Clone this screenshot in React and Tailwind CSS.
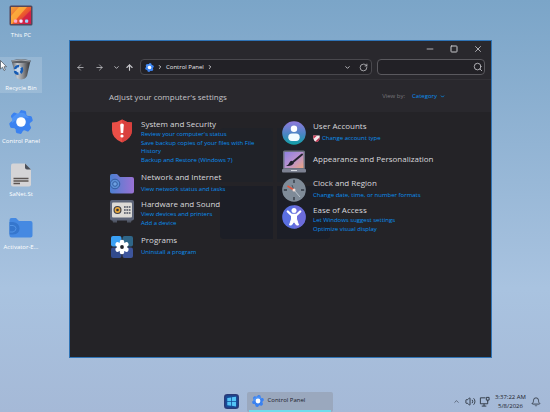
import {
  ArrowLeft,
  ArrowRight,
  ArrowUp,
  Bell,
  ChevronDown,
  ChevronRight,
  ChevronUp,
  Minus,
  RotateCw,
  Search,
  Square,
  Volume2,
  X,
} from 'lucide-react'

function GearIcon({ className }) {
  return (
    <svg viewBox="0 0 24 24" className={className} aria-hidden="true">
      <g fill="#3b82f0">
        <circle cx="12" cy="12" r="9" />
        {[0, 60, 120, 180, 240, 300].map((a) => (
          <path key={a} d="M7.500 6 9 1.500Q9.400 .2 10.600 .2H13.400Q14.600 .2 15 1.500L16.500 6Z" transform={`rotate(${a + 12} 12 12)`} />
        ))}
      </g>
      <path d="M3 8Q8 2 15 3L20 8Q12 6 3 13Z" fill="#5ba0fa" opacity=".6" />
      <circle cx="12" cy="12" r="4.800" fill="#fff" />
    </svg>
  )
}

function PcIcon({ className }) {
  return (
    <svg viewBox="0 0 24 24" className={className} aria-hidden="true">
      <defs>
        <linearGradient id="pc" x1="0" y1="0" x2="1" y2="1">
          <stop offset="0" stopColor="#f2a33c" />
          <stop offset=".5" stopColor="#ee5b2c" />
          <stop offset="1" stopColor="#b81f5c" />
        </linearGradient>
      </defs>
      <rect x=".5" y="1.500" width="23" height="20" rx="1.500" fill="#54475a" />
      <rect x="2" y="3" width="20" height="17" fill="url(#pc)" />
      <path d="M2 12 10 3H18L3 20H2Z" fill="#ffb93f" opacity=".75" />
      <path d="M22 6 10 18V20H22Z" fill="#d31b45" opacity=".75" />
      <rect x="5" y="15.500" width="3.200" height="3.200" rx="1" fill="#ffa8cf" />
      <rect x="10.400" y="15.500" width="3.200" height="3.200" rx="1" fill="#f4e6ff" />
      <rect x="16" y="15.500" width="3.200" height="3.200" rx="1" fill="#9ed4ff" />
    </svg>
  )
}

function BinIcon({ className }) {
  return (
    <svg viewBox="0 0 24 24" className={className} aria-hidden="true">
      <defs>
        <linearGradient id="bin" x1="0" x2="1">
          <stop offset="0" stopColor="#55595f" />
          <stop offset=".3" stopColor="#c3c8ce" />
          <stop offset=".6" stopColor="#8b8d91" />
          <stop offset="1" stopColor="#2c2d30" />
        </linearGradient>
      </defs>
      <path d="M2.500 3.500 6.500 19Q8 22.500 12.500 22.500Q16.500 22 18 19L21.500 3.500Z" fill="url(#bin)" />
      <path d="M2.500 3.500Q12 1 21.500 3.500L21 5.500Q12 6.500 3.200 5.500Z" fill="#5b5e63" />
      <path d="M3 4Q12 2 21 4" fill="none" stroke="#c9cdd2" strokeWidth=".7" />
      <circle cx="9.500" cy="13" r="3.800" fill="#c9d8ea" />
      <g fill="none" stroke="#155bb4" strokeWidth="2.400">
        <path d="M6 12Q7 8.800 10 9.200" />
        <path d="M12.500 10.500Q14 14 11.500 16" />
        <path d="M9.500 16.800Q6.500 16.800 6 14" />
      </g>
    </svg>
  )
}

function FileIcon({ className }) {
  return (
    <svg viewBox="0 0 24 24" className={className} aria-hidden="true">
      <path d="M4 .5H16L22 6.500V21.500Q22 23.500 20 23.500H4Q2 23.500 2 21.500V2.500Q2 .5 4 .5Z" fill="#d5d4d6" />
      <path d="M16 .5 22 6.500H18Q16 6.500 16 4.500Z" fill="#4b505a" />
      <path d="M4.500 15.500H19.500M4.500 18H19.500M4.500 20.500H11" stroke="#5c5553" strokeWidth="1.500" />
    </svg>
  )
}

function FolderIcon({ className }) {
  return (
    <svg viewBox="0 0 24 24" className={className} aria-hidden="true">
      <path d="M.5 4Q.5 2 2.500 2H7L10 5H21.500Q23.500 5 23.500 7V19.500Q23.500 21.500 21.500 21.500H2.500Q.5 21.500 .5 19.500Z" fill="#4589e2" />
      <path d="M.5 6H4Q10.500 7 10.500 12.500T4 18.500H.5Z" fill="#3576cd" />
      <path d="M1 9.500H4Q7 10 7 12.500T4 16H1" fill="none" stroke="#5294e6" />
    </svg>
  )
}

function ShieldIcon({ className }) {
  return (
    <svg viewBox="0 0 24 24" className={className} aria-hidden="true">
      <path d="M12 .5Q16.500 3.600 22 3.500V11Q22 19.500 12 23.500Q2 19.500 2 11V3.500Q7.500 3.600 12 .5Z" fill="#ea4f47" />
      <path d="M12 .5Q16.500 3.600 22 3.500V11Q22 19.500 12 23.500Z" fill="#d9403d" />
      <path d="M10.200 6Q10.200 4.500 12 4.500T13.800 6L13.200 14H10.800Z" fill="#fff" />
      <circle cx="12" cy="17" r="1.600" fill="#fff" />
    </svg>
  )
}

function NetworkIcon({ className }) {
  return (
    <svg viewBox="0 0 24 24" className={className} aria-hidden="true">
      <defs>
        <linearGradient id="net" x1="0" x2="1">
          <stop offset="0" stopColor="#4c7fd0" />
          <stop offset="1" stopColor="#9a72d4" />
        </linearGradient>
      </defs>
      <path d="M0 4Q0 2 2 2H7L10 5H22Q24 5 24 7V19.500Q24 21.500 22 21.500H2Q0 21.500 0 19.500Z" fill="url(#net)" />
      <circle cx="5" cy="12" r="4.800" fill="#5b8ed6" stroke="#335c9f" />
      <circle cx="5" cy="12" r="2.300" fill="#6ea1e2" stroke="#335c9f" />
    </svg>
  )
}

function SafeIcon({ className }) {
  return (
    <svg viewBox="0 0 24 24" className={className} aria-hidden="true">
      <path d="M2 20H7V23.500H3ZM17 20H22L21 23.500H17Z" fill="#4f5563" />
      <rect y="1" width="24" height="20.500" rx="2" fill="#5c6478" />
      <rect x="2" y="3.500" width="20" height="15" rx="1" fill="#dcdad6" />
      <circle cx="7.500" cy="11" r="4" fill="#3c3d46" />
      <circle cx="7.500" cy="11" r="2.900" fill="#e6a83c" />
      <circle cx="7.500" cy="11" r="1.300" fill="#2f2f38" />
      <path d="M14 8H20.500M14 11H20.500M14 14H20.500" stroke="#4a5060" strokeWidth="1.700" strokeDasharray="1.700 .7" />
    </svg>
  )
}

function ProgramsIcon({ className }) {
  return (
    <svg viewBox="0 0 24 24" className={className} aria-hidden="true">
      <rect x="1" y="1" width="10.500" height="10.500" rx="2" fill="#3aa0f4" />
      <rect x="12.500" y="1" width="10.500" height="10.500" rx="2" fill="#2f6688" />
      <rect x="1" y="12.500" width="10.500" height="10.500" rx="2" fill="#314a8c" />
      <rect x="12.500" y="12.500" width="10.500" height="10.500" rx="2" fill="#3d559c" />
      <g fill="#fff">
        {[0, 60, 120, 180, 240, 300].map((a) => (
          <circle key={a} cx="12" cy="7" r="2.300" transform={`rotate(${a} 12 12)`} />
        ))}
        <circle cx="12" cy="12" r="5" />
      </g>
      <circle cx="12" cy="12" r="1.900" fill="#23242a" />
    </svg>
  )
}

function UserIcon({ className }) {
  return (
    <svg viewBox="0 0 24 24" className={className} aria-hidden="true">
      <defs>
        <linearGradient id="user" x1="0" y1="0" x2="0" y2="1">
          <stop offset="0" stopColor="#9179dc" />
          <stop offset=".55" stopColor="#4a86c4" />
          <stop offset="1" stopColor="#0fa0a4" />
        </linearGradient>
      </defs>
      <circle cx="12" cy="12" r="11.800" fill="url(#user)" />
      <circle cx="12" cy="7.800" r="3.200" fill="#fff" />
      <rect x="6.300" y="12.500" width="11.400" height="7.500" rx="3.700" fill="#f2fbff" />
    </svg>
  )
}

function AppearanceIcon({ className }) {
  return (
    <svg viewBox="0 0 24 24" className={className} aria-hidden="true">
      <defs>
        <linearGradient id="look" x1="0" y1="0" x2="1" y2="1">
          <stop offset="0" stopColor="#8f80e0" />
          <stop offset=".5" stopColor="#b892d0" />
          <stop offset="1" stopColor="#eba481" />
        </linearGradient>
      </defs>
      <rect x="1" y=".5" width="22" height="19" rx="1.500" fill="#6c7180" />
      <rect x="2.500" y="2" width="19" height="16" fill="url(#look)" />
      <path d="M20 4.500 11 12" stroke="#252530" strokeWidth="2" strokeLinecap="round" />
      <path d="M10 10.800 12 13Q10 16.500 4 15.800Q6.500 15 7.200 13Q8 10.800 10 10.800Z" fill="#1f202c" />
      <rect y="19" width="24" height="3.500" rx="1" fill="#7c8192" />
      <path d="M9 20.500H15" stroke="#d5d8e0" />
    </svg>
  )
}

function ClockIcon({ className }) {
  return (
    <svg viewBox="0 0 24 24" className={className} aria-hidden="true">
      <circle cx="12" cy="12" r="11.800" fill="#7f8b98" />
      <path d="M12 1.800V5M12 19V22.200M1.800 12H5M19 12H22.200" stroke="#343b45" strokeWidth="1.400" />
      <path d="M12 12 10 7" stroke="#4b5561" strokeWidth="1" />
      <path d="M12 12 5.500 8" stroke="#e2553c" strokeWidth="1.600" />
      <path d="M12 12 18 19" stroke="#bcc5ce" />
      <circle cx="12" cy="12" r="1.500" fill="#f4dcd4" />
    </svg>
  )
}

function AccessIcon({ className }) {
  return (
    <svg viewBox="0 0 24 24" className={className} aria-hidden="true">
      <circle cx="12" cy="12" r="11.800" fill="#5a6fe0" />
      <path d="M12 .2A11.800 11.800 0 0 1 12 23.800Z" fill="#7d69d6" opacity=".5" />
      <circle cx="12" cy="5.600" r="2.500" fill="#fff" />
      <path d="M5.800 6.500 9.500 10H14.500L18.200 6.500" fill="none" stroke="#fff" strokeWidth="2.400" strokeLinecap="round" strokeLinejoin="round" />
      <path d="M9.500 9.500H14.500V14L16.500 20H14.500L12 16.500 9.500 20H7.500L9.500 14Z" fill="#fff" stroke="#fff" strokeLinejoin="round" />
    </svg>
  )
}

function UacIcon({ className }) {
  return (
    <svg viewBox="0 0 12 12" className={className} aria-hidden="true">
      <path d="M.5 1H11.500V6Q11 10 6 12Q1 10 .5 6Z" fill="#f5e9ec" />
      <path d="M.5 1H7L.6 7Z" fill="#c83a55" />
      <path d="M11.500 4V6Q11 10 6 12L4 11Z" fill="#b92d4a" />
    </svg>
  )
}

function StartIcon({ className }) {
  return (
    <svg viewBox="0 0 16 16" className={className} aria-hidden="true">
      <rect width="16" height="16" rx="3.500" fill="#2b3a78" />
      <rect x="1.500" y="1.500" width="13" height="13" rx="2.500" fill="#174b97" />
      <path d="M3.500 4.200 7.500 3.600V7.700H3.500ZM8.300 3.500 12.800 2.900V7.700H8.300ZM3.500 8.500H7.500V12.500L3.500 11.900ZM8.300 8.500H12.800V13.200L8.300 12.600Z" fill="#53c3f5" />
    </svg>
  )
}

function NetworkTrayIcon({ className }) {
  return (
    <svg viewBox="0 0 12 12" className={className} fill="none" stroke="currentColor" aria-hidden="true">
      <path d="M7 2H1.500V8.500H9.500V6M5.500 8.500V11M3 11H8" />
      <path d="M8 1.500H11V4.500H8ZM9.500 4.500V6.500" />
    </svg>
  )
}

function CursorIcon({ className }) {
  return (
    <svg viewBox="0 0 7 11" className={className} aria-hidden="true">
      <path d="M.5 .5V9L2.500 7.200 4 10.500 5.300 9.800 4 6.700H6.500Z" fill="#fff" stroke="#444a55" strokeWidth=".7" />
    </svg>
  )
}

const shortcuts = [
  { name: 'This PC', Icon: PcIcon },
  { name: 'Recycle Bin', Icon: BinIcon, hovered: true },
  { name: 'Control Panel', Icon: GearIcon },
  { name: 'SaNet.St', Icon: FileIcon },
  { name: 'Activator-E...', Icon: FolderIcon },
]

const leftItems = [
  {
    title: 'System and Security',
    Icon: ShieldIcon,
    links: [
      "Review your computer's status",
      'Save backup copies of your files with File History',
      'Backup and Restore (Windows 7)',
    ],
  },
  { title: 'Network and Internet', Icon: NetworkIcon, links: ['View network status and tasks'] },
  { title: 'Hardware and Sound', Icon: SafeIcon, links: ['View devices and printers', 'Add a device'] },
  { title: 'Programs', Icon: ProgramsIcon, links: ['Uninstall a program'] },
]

const rightItems = [
  { title: 'User Accounts', Icon: UserIcon, links: ['Change account type'], shield: true },
  { title: 'Appearance and Personalization', Icon: AppearanceIcon, links: [] },
  { title: 'Clock and Region', Icon: ClockIcon, links: ['Change date, time, or number formats'] },
  { title: 'Ease of Access', Icon: AccessIcon, links: ['Let Windows suggest settings', 'Optimize visual display'] },
]

function Category({ title, Icon, links, shield }) {
  return (
    <section className={links.length ? 'flex gap-[7px]' : 'flex gap-[7px] pt-0.5 pb-px'}>
      <Icon className="mt-px size-6 shrink-0" />
      <div className={links.length > 1 ? 'pb-[5px]' : links.length ? '' : 'pt-1'}>
        <h2 className="text-[8px] leading-[11px] whitespace-nowrap text-[#d8d8dc]">{title}</h2>
        {links.length > 0 && (
          <ul className={links.length > 1 ? 'mt-px flex flex-col gap-px' : 'mt-[3px]'}>
            {links.map((link) => (
              <li key={link} className="flex items-center gap-0.5 text-[6px] leading-[8px] font-medium text-[#0a90f0]">
                {shield && <UacIcon className="size-[7px]" />}
                <a href="#">{link}</a>
              </li>
            ))}
          </ul>
        )}
      </div>
    </section>
  )
}

function Watermark() {
  return (
    <div className="pointer-events-none absolute top-4 left-[150px] grid grid-cols-2 gap-1" aria-hidden="true">
      <div className="h-[54px] w-[53px] rounded-tl bg-[#202228]" />
      <div className="h-[54px] w-[53px] rounded-tr bg-[#202228]" />
      <div className="h-[53px] w-[53px] rounded-bl bg-[#1c1e26]" />
      <div className="h-[53px] w-[53px] rounded-br bg-[#1c1e26]" />
    </div>
  )
}

function ControlPanelWindow() {
  return (
    <main className="flex flex-1 flex-col border border-[#2f73b5] bg-[#242327]">
      <header className="border-b border-[#323136] bg-[#29282d] text-[#c8c8cc]">
        <div className="flex h-[15px] items-center justify-end gap-[14px] pr-2">
          <button aria-label="Minimize"><Minus className="size-2.5" /></button>
          <button aria-label="Maximize"><Square className="size-2.5 p-px" strokeWidth={3} /></button>
          <button aria-label="Close"><X className="size-2.5" /></button>
        </div>
        <div className="flex items-center gap-[5px] pt-[3px] pr-1.5 pb-1 pl-1.5">
          <nav className="flex w-[59px] items-center">
            <button aria-label="Back" className="mr-2.5"><ArrowLeft className="size-[9px]" /></button>
            <button aria-label="Forward" className="mr-[9px]"><ArrowRight className="size-[9px]" /></button>
            <button aria-label="Recent" className="mr-[5px]"><ChevronDown className="size-[7px]" strokeWidth={3} /></button>
            <button aria-label="Up"><ArrowUp className="size-[9px]" strokeWidth={3} /></button>
          </nav>
          <div className="flex h-4 flex-1 items-center rounded-sm border border-[#49484d] bg-[#222126] pr-[3px] pl-1">
            <GearIcon className="size-[9px]" />
            <ChevronRight className="mx-[3px] size-[6px]" strokeWidth={4} />
            <a href="#" className="text-[6px] leading-[8px] font-medium text-[#e8e8ea]">Control Panel</a>
            <ChevronRight className="ml-[3px] size-[6px]" strokeWidth={4} />
            <button aria-label="Previous locations" className="mr-2 ml-auto"><ChevronDown className="size-[7px]" strokeWidth={3} /></button>
            <button aria-label="Refresh"><RotateCw className="size-[9px]" /></button>
          </div>
          <label className="flex h-4 w-[108px] items-center rounded-sm border border-[#5a595e] bg-[#222126] pr-px pl-1">
            <input type="text" aria-label="Search Control Panel" className="min-w-0 flex-1 text-[6px] outline-none" />
            <Search className="size-2.5" />
          </label>
        </div>
      </header>
      <div className="flex h-8 items-center justify-between bg-[#29282d] pr-[46px] pl-[39px]">
        <h1 className="text-[8px] leading-[11px] text-[#c4c4c8]">Adjust your computer's settings</h1>
        <div className="flex items-center text-[6px] leading-[8px]">
          <span className="mr-[7px] text-[#77767b]">View by:</span>
          <button className="flex items-center gap-[3px] font-medium text-[#0a90f0]">
            Category
            <ChevronDown className="size-[5px]" strokeWidth={4} />
          </button>
        </div>
      </div>
      <div className="relative flex-1">
        <Watermark />
        <div className="relative grid grid-cols-2 pt-1.5 pr-[37px] pl-10">
          <div className="flex flex-col gap-0.5 pr-5">
            {leftItems.map((item) => (
              <Category key={item.title} {...item} />
            ))}
          </div>
          <div className="flex flex-col gap-0.5 pt-0.5">
            {rightItems.map((item) => (
              <Category key={item.title} {...item} />
            ))}
          </div>
        </div>
      </div>
    </main>
  )
}

function Taskbar() {
  return (
    <footer className="grid h-[21px] grid-cols-[1fr_auto_1fr] items-center pl-1.5 text-[#2c3440]">
      <div className="col-start-2 flex items-center gap-2">
        <button aria-label="Start"><StartIcon className="size-[15px]" /></button>
        <button className="flex h-5 w-[86px] flex-col justify-end rounded-xs bg-[#9aa8be] px-0.5">
          <span className="flex flex-1 items-center gap-1 pl-[3px] text-[6px] leading-[9px] font-medium text-[#1c222c]">
            <GearIcon className="size-3" />
            Control Panel
          </span>
          <span className="h-0.5 w-full bg-[#6fdcec]" />
        </button>
      </div>
      <div className="flex items-center justify-end gap-[3px] pr-[9px]">
        <ChevronUp className="size-[7px]" />
        <Volume2 className="ml-0.5 size-[11px]" />
        <NetworkTrayIcon className="mr-0.5 size-[11px]" />
        <time className="mr-0.5 text-center text-[6px] leading-[9px] font-medium whitespace-nowrap text-[#1c222c]">
          3:37:22 AM
          <br />
          5/8/2026
        </time>
        <Bell className="size-[10px]" />
      </div>
    </footer>
  )
}

export default function App() {
  return (
    <div className="relative flex min-h-screen flex-col bg-linear-to-b from-[#7ba5c8] via-[#a9c3e0] via-70% to-[#a5b9d7] font-['Open_Sans','Noto_Sans',sans-serif]">
      <div className="flex flex-1">
        <aside className="flex w-[42px] flex-col gap-[17px] pt-1">
          {shortcuts.map(({ name, Icon, hovered }) => (
            <button
              key={name}
              className={hovered ? 'flex h-9 flex-col items-center bg-white/15' : 'flex h-9 flex-col items-center'}
            >
              <Icon className="size-6 shrink-0" />
              <span className="text-[6px] leading-[14px] font-medium whitespace-nowrap text-white">{name}</span>
            </button>
          ))}
        </aside>
        <div className="flex flex-1 pt-10 pr-[58px] pb-[33px] pl-[27px]">
          <ControlPanelWindow />
        </div>
      </div>
      <Taskbar />
      <CursorIcon className="absolute top-[60px] left-0 h-[11px] w-[7px]" />
    </div>
  )
}
